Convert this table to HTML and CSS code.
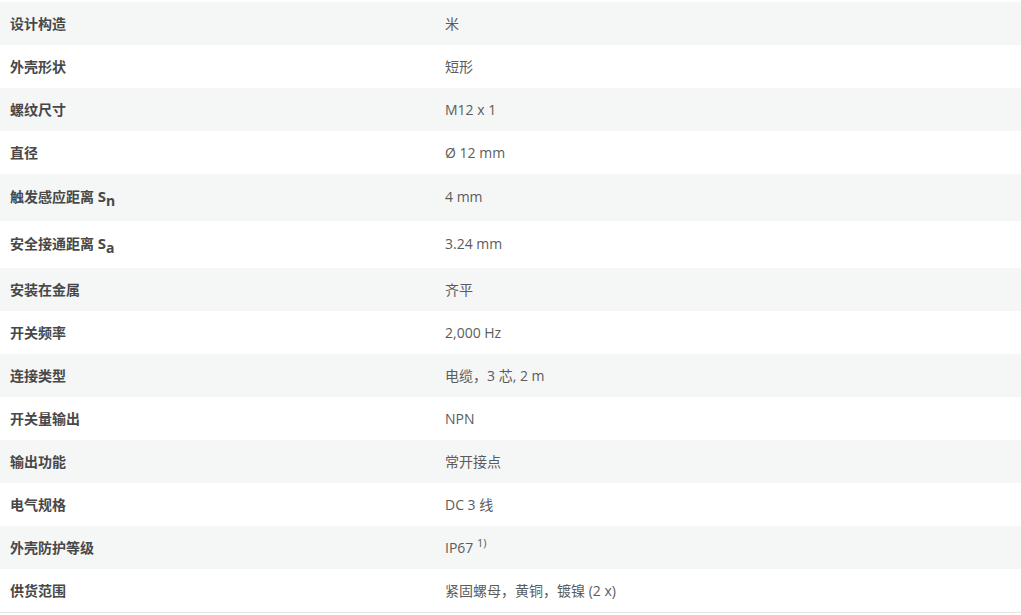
FILE: index.html
```html
<!DOCTYPE html>
<html lang="zh-CN">
<head>
<meta charset="utf-8">
<title>技术数据</title>
<link rel="stylesheet" href="styles.css">
</head>
<body>
<div class="specs">
  <div class="row"><div class="label">设计构造</div><div class="value">米</div></div>
  <div class="row"><div class="label">外壳形状</div><div class="value">短形</div></div>
  <div class="row"><div class="label">螺纹尺寸</div><div class="value">M12 x 1</div></div>
  <div class="row"><div class="label">直径</div><div class="value">Ø 12 mm</div></div>
  <div class="row row--tall"><div class="label">触发感应距离 <span class="sym">S<sub>n</sub></span></div><div class="value">4 mm</div></div>
  <div class="row row--tall"><div class="label">安全接通距离 <span class="sym">S<sub>a</sub></span></div><div class="value">3.24 mm</div></div>
  <div class="row"><div class="label">安装在金属</div><div class="value">齐平</div></div>
  <div class="row"><div class="label">开关频率</div><div class="value">2,000 Hz</div></div>
  <div class="row"><div class="label">连接类型</div><div class="value">电缆，3 芯, 2 m</div></div>
  <div class="row"><div class="label">开关量输出</div><div class="value">NPN</div></div>
  <div class="row"><div class="label">输出功能</div><div class="value">常开接点</div></div>
  <div class="row"><div class="label">电气规格</div><div class="value">DC 3 线</div></div>
  <div class="row"><div class="label">外壳防护等级</div><div class="value">IP67 <sup>1)</sup></div></div>
  <div class="row"><div class="label">供货范围</div><div class="value">紧固螺母，黄铜，镀镍 (2 x)</div></div>
</div>
</body>
</html>
```

FILE: styles.css
```css
html, body {
  margin: 0;
  padding: 0;
  background: #ffffff;
}

body {
  font-family: "Open Sans", "Noto Sans CJK SC", sans-serif;
  font-size: 14px;
  color: #333;
  padding-top: 2px;
}

.specs {
  display: flex;
  flex-direction: column;
  border-bottom: 1px solid #e6e6e6;
}

.row {
  display: grid;
  grid-template-columns: 435px 1fr;
  line-height: 19px;
  padding: 12px 0;
}

.row:nth-child(odd) {
  background: #f5f6f6;
}

.row--tall {
  padding: 13px 0 15px;
}

.label {
  padding-left: 10px;
  font-weight: 700;
  color: #484848;
}

.value {
  padding-left: 10px;
  color: #5c5c5c;
}

.sym {
  font-family: "Open Sans", sans-serif;
  font-size: 15px;
  font-weight: 700;
}

.sym sub {
  font-size: 14px;
  line-height: 0;
  vertical-align: -4px;
}

.value sup {
  font-size: 11px;
  line-height: 0;
  vertical-align: 6px;
}
```
